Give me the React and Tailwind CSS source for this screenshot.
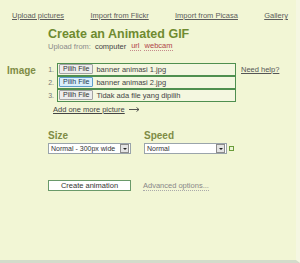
import React from "react";

const files = [
  { n: "1.", name: "banner animasi 1.jpg" },
  { n: "2.", name: "banner animasi 2.jpg", active: true },
  { n: "3.", name: "Tidak ada file yang dipilih" },
];

function FakeSelect({ value, width }) {
  return (
    <div
      className={`flex items-center h-[11px] bg-white border border-[#9aa4ab] ${width}`}
    >
      <span className="flex-1 pl-[2px] text-[7px] leading-[9px] text-[#333] whitespace-nowrap overflow-hidden">
        {value}
      </span>
      <span className="flex items-center justify-center w-[9px] h-[9px] mr-px bg-[#e4e4e4] border border-[#8c8c8c]">
        <span className="block w-0 h-0 border-l-[2px] border-r-[2px] border-t-[2px] border-l-transparent border-r-transparent border-t-[#222]" />
      </span>
    </div>
  );
}

export default function App() {
  return (
    <div className="relative w-[300px] h-[263px] overflow-hidden bg-[#f2f6d5] font-['Liberation_Sans',Arial,sans-serif] border-b-[3px] border-b-[#d3dccb] border-r-[4px] border-r-[#f5f7e2]">
      {/* top nav */}
      <div className="flex justify-between pl-[12px] pr-[8px] pt-[11px] text-[7.5px] leading-[9px] text-[#5c5c5c]">
        <a className="underline">Upload pictures</a>
        <a className="underline">Import from Flickr</a>
        <a className="underline">Import from Picasa</a>
        <a className="underline">Gallery</a>
      </div>

      {/* heading */}
      <div className="pl-[48px] mt-[7px]">
        <h1 className="text-[12.5px] leading-[14px] font-bold text-[#6f8b30]">
          Create an Animated GIF
        </h1>
        <div className="flex items-center gap-[3px] text-[7.5px] leading-[9px] text-[#8a8a8a]">
          <span>Upload from:</span>
          <span className="text-[#444] px-px">computer</span>
          <span className="text-[#b0454a] border-b border-dotted border-[#c58a8a] px-px">url</span>
          <span className="text-[#b0454a] border-b border-dotted border-[#c58a8a] px-px">webcam</span>
        </div>
      </div>

      {/* image section */}
      <div className="flex mt-[12px]">
        <div className="w-[45px] pl-[7px] pt-[2px] text-[10px] leading-[12px] font-bold text-[#7f8c45]">
          Image
        </div>
        <div>
          <ol className="flex flex-col">
            {files.map((f) => (
              <li key={f.n} className="flex items-center h-[13px]">
                <span className="w-[12px] pr-[3px] text-right text-[7px] leading-[9px] text-[#777]">
                  {f.n}
                </span>
                <div className="flex items-center w-[179px] h-[13px] border border-[#4f8f4f] -mt-px first:mt-0 bg-[#f4f7e0]">
                  <span
                    className={`ml-px h-[10px] px-[3px] flex items-center text-[7px] leading-[8px] rounded-[1px] border ${
                      f.active
                        ? "bg-[#d9eefb] border-[#5e9ccb] text-[#1c3b55]"
                        : "bg-[#ececec] border-[#a3a3a3] text-[#333]"
                    }`}
                  >
                    Pilih File
                  </span>
                  <span className="ml-[3px] text-[7.5px] leading-[9px] text-[#444] whitespace-nowrap">
                    {f.name}
                  </span>
                </div>
                {f.n === "1." && (
                  <a className="ml-[5px] text-[7.5px] leading-[9px] text-[#555] underline">
                    Need help?
                  </a>
                )}
              </li>
            ))}
          </ol>
          <div className="mt-[3px] ml-[8px] flex items-center gap-[4px] text-[7.5px] leading-[9px] text-[#444]">
            <a className="underline">Add one more picture</a>
            <svg width="11" height="5" viewBox="0 0 11 5" className="text-[#444]">
              <path d="M0 2.5H10M7.5 0.5L10 2.5L7.5 4.5" fill="none" stroke="currentColor" strokeWidth="0.9" />
            </svg>
          </div>
        </div>
      </div>

      {/* size / speed */}
      <div className="flex pl-[48px] mt-[16px]">
        <div className="w-[96px]">
          <div className="text-[10px] leading-[12px] font-bold text-[#7f8c45]">Size</div>
          <div className="mt-[1px]">
            <FakeSelect value="Normal - 300px wide" width="w-[83px]" />
          </div>
        </div>
        <div>
          <div className="text-[10px] leading-[12px] font-bold text-[#7f8c45]">Speed</div>
          <div className="mt-[1px] flex items-center gap-[2px]">
            <FakeSelect value="Normal" width="w-[83px]" />
            <span className="block w-[5px] h-[5px] border border-[#6a9c3a] bg-[#eaf3d2]" />
          </div>
        </div>
      </div>

      {/* actions */}
      <div className="flex items-center pl-[48px] mt-[26px]">
        <button className="w-[83px] h-[11px] flex items-center justify-center bg-white border border-[#6a9a6a] text-[7.5px] leading-[9px] text-[#333]">
          Create animation
        </button>
        <a className="ml-[12px] text-[7.5px] leading-[9px] text-[#888] border-b border-dotted border-[#aaa]">
          Advanced options...
        </a>
      </div>
    </div>
  );
}
